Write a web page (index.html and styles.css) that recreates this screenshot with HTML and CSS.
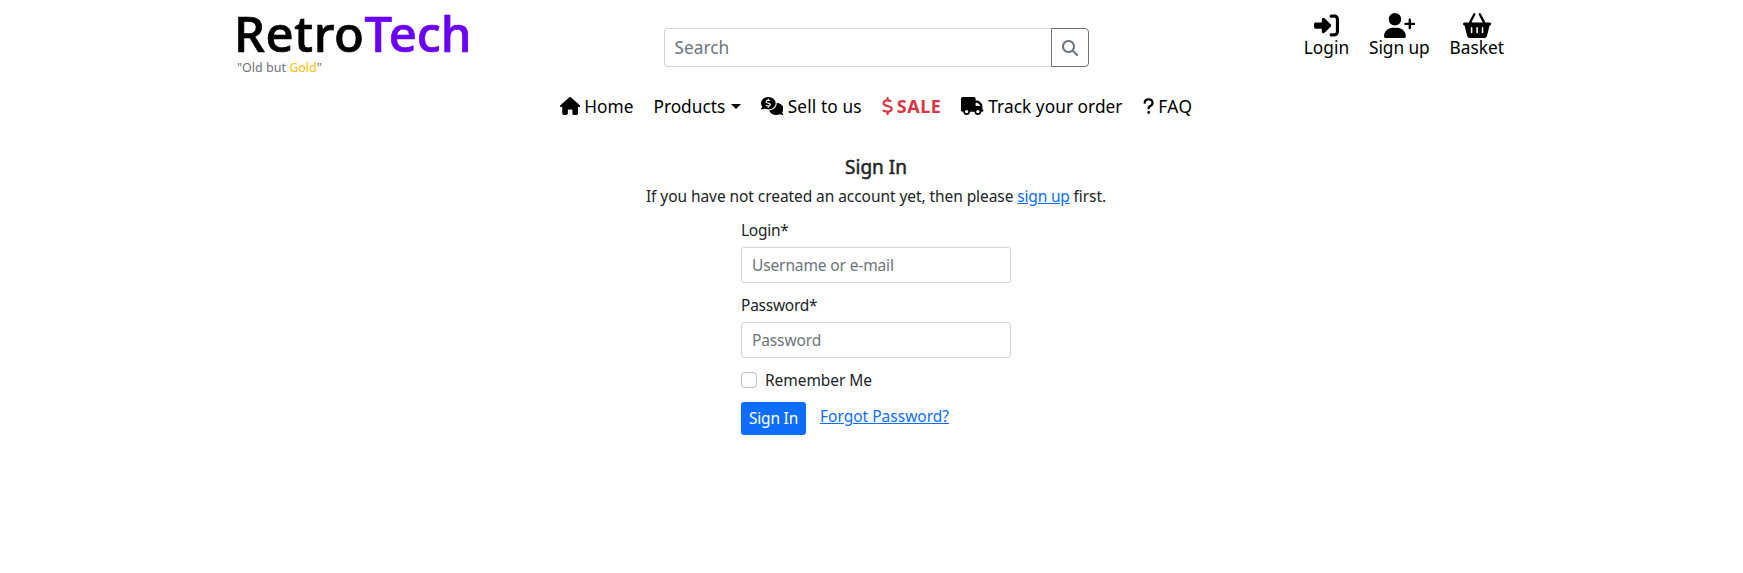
FILE: index.html
```html
<!DOCTYPE html>
<html lang="en">
<head>
<meta charset="utf-8">
<title>RetroTech - Sign In</title>
<link rel="stylesheet" href="styles.css">
</head>
<body>
<header class="header">
  <div class="brand">
    <a class="logo" href="#"><span class="logo-retro">Retro</span><span class="logo-tech">Tech</span></a>
    <span class="tagline">"Old but <span class="gold">Gold</span>"</span>
  </div>
  <form class="search">
    <input class="search-input" type="text" placeholder="Search" aria-label="Search">
    <button class="search-button" type="button" aria-label="Search">
      <svg class="search-icon" viewBox="0 0 512 512"><path d="M416 208c0 45.9-14.9 88.3-40 122.7L502.6 457.4c12.5 12.5 12.5 32.8 0 45.3s-32.8 12.5-45.3 0L330.7 376c-34.4 25.2-76.8 40-122.7 40C93.1 416 0 322.9 0 208S93.1 0 208 0S416 93.1 416 208zM208 352a144 144 0 1 0 0-288 144 144 0 1 0 0 288z"/></svg>
    </button>
  </form>
  <div class="account">
    <a class="account-link login" href="#">
      <svg class="account-icon" viewBox="0 0 512 512"><path d="M217.9 105.9L340.7 228.7c7.2 7.2 11.3 17.1 11.3 27.3s-4.1 20.1-11.3 27.3L217.9 406.1c-6.4 6.4-15 9.9-24 9.9c-18.7 0-33.9-15.2-33.9-33.9l0-62.1L32 320c-17.7 0-32-14.3-32-32l0-64c0-17.7 14.3-32 32-32l128 0 0-62.1c0-18.7 15.2-33.9 33.9-33.9c9 0 17.6 3.6 24 9.9zM352 416l64 0c17.7 0 32-14.3 32-32l0-256c0-17.7-14.3-32-32-32l-64 0c-17.7 0-32-14.3-32-32s14.3-32 32-32l64 0c53 0 96 43 96 96l0 256c0 53-43 96-96 96l-64 0c-17.7 0-32-14.3-32-32s14.3-32 32-32z"/></svg>
      <span>Login</span>
    </a>
    <a class="account-link signup" href="#">
      <svg class="account-icon" viewBox="0 0 640 512"><path d="M96 128a128 128 0 1 1 256 0A128 128 0 1 1 96 128zM0 482.3C0 383.8 79.8 304 178.3 304h91.4C368.2 304 448 383.8 448 482.3c0 16.4-13.3 29.7-29.7 29.7H29.7C13.3 512 0 498.7 0 482.3zM504 312V248H440c-13.3 0-24-10.7-24-24s10.7-24 24-24h64V136c0-13.3 10.7-24 24-24s24 10.7 24 24v64h64c13.3 0 24 10.7 24 24s-10.7 24-24 24H552v64c0 13.3-10.7 24-24 24s-24-10.7-24-24z"/></svg>
      <span>Sign up</span>
    </a>
    <a class="account-link basket" href="#">
      <svg class="account-icon" viewBox="0 0 576 512"><path d="M253.3 35.1c6.1-11.8 1.5-26.3-10.2-32.4s-26.3-1.5-32.4 10.2L117.6 192H32c-17.7 0-32 14.3-32 32s14.3 32 32 32L83.9 463.5C91 492 116.6 512 146 512H430c29.4 0 55-20 62.1-48.5L544 256c17.7 0 32-14.3 32-32s-14.3-32-32-32H458.4L365.3 12.9C359.2 1.2 344.7-3.4 332.9 2.7s-16.3 20.6-10.2 32.4L404.3 192H171.7L253.3 35.1zM192 304v96c0 8.8-7.2 16-16 16s-16-7.2-16-16V304c0-8.8 7.2-16 16-16s16 7.2 16 16zm96-16c8.8 0 16 7.2 16 16v96c0 8.8-7.2 16-16 16s-16-7.2-16-16V304c0-8.8 7.2-16 16-16zm128 16v96c0 8.8-7.2 16-16 16s-16-7.2-16-16V304c0-8.8 7.2-16 16-16s16 7.2 16 16z"/></svg>
      <span>Basket</span>
    </a>
  </div>
</header>
<nav class="nav">
  <a class="nav-link home" href="#"><svg class="nav-icon" viewBox="0 0 576 512"><path d="M575.8 255.5c0 18-15 32.1-32 32.1h-32l.7 160.2c0 2.7-.2 5.4-.5 8.1V472c0 22.1-17.9 40-40 40H456c-1.1 0-2.2 0-3.3-.1c-1.4 .1-2.8 .1-4.2 .1H416 392c-22.1 0-40-17.9-40-40V448 384c0-17.7-14.3-32-32-32H256c-17.7 0-32 14.3-32 32v64 24c0 22.1-17.9 40-40 40H160 128.1c-1.5 0-3-.1-4.5-.2c-1.2 .1-2.4 .2-3.6 .2H104c-22.1 0-40-17.9-40-40V360c0-.9 0-1.9 .1-2.8V287.6H32c-18 0-32-14-32-32.1c0-9 3-17 10-24L266.4 8c7-7 15-8 22-8s15 2 21 7L564.8 231.5c8 7 12 15 11 24z"/></svg><span>Home</span></a>
  <a class="nav-link products" href="#"><span>Products</span><span class="caret"></span></a>
  <a class="nav-link sell" href="#"><svg class="nav-icon" viewBox="0 0 640 512"><path d="M416 176c0 97.2-93.1 176-208 176c-38.2 0-73.9-8.7-104.7-23.9c-7.5 4-16 7.9-25.2 11.4C59.8 346.4 37.8 352 16 352c-6.9 0-13.1-4.5-15.2-11.1s.2-13.8 5.8-17.9c.8-.6 14-10 19-19c5.5-7 10.7-15.4 14.2-24.7C14.7 250.3 0 214.6 0 176C0 78.8 93.1 0 208 0S416 78.8 416 176zM231.5 383C348.9 372.9 448 288.3 448 176c0-5.2-.2-10.4-.6-15.5C555.1 167.1 640 243.2 640 336c0 38.6-14.7 74.3-39.6 103.4c3.5 9.4 8.7 17.7 14.2 24.7c4.8 6.2 9.7 11 13.3 14.3c1.8 1.6 3.3 2.9 5.6 4.7c5.6 4.1 7.9 11.3 5.8 17.9c-2.1 6.6-8.3 11.1-15.2 11.1c-21.8 0-43.8-5.6-62.1-12.5c-9.2-3.5-17.8-7.4-25.2-11.4C505.9 503.3 470.2 512 432 512c-95.6 0-176.2-54.6-200.5-129z"/><path class="coin" transform="translate(126 45) scale(.51)" d="M160 0c17.7 0 32 14.3 32 32V67.7c1.6 .2 3.1 .4 4.7 .7c.4 .1 .7 .1 1.1 .2l48 8.8c17.4 3.2 28.9 19.9 25.7 37.2s-19.9 28.9-37.2 25.7l-47.5-8.7c-31.3-4.6-58.9-1.5-78.3 6.2s-27.2 18.3-29 28.1c-2 10.7-.5 16.7 1.2 20.4c1.8 3.9 5.5 8.3 12.8 13.2c16.3 10.7 41.3 17.7 73.7 26.3l2.9 .8c28.6 7.6 63.6 16.8 89.6 33.8c14.2 9.3 27.6 21.9 35.9 39.5c8.5 17.9 10.3 37.9 6.4 59.2c-6.9 38-33.1 63.4-65.6 76.7c-13.7 5.6-28.6 9.2-44.4 11V480c0 17.7-14.3 32-32 32s-32-14.3-32-32V445.1c-.4-.1-.9-.1-1.3-.2l-.2 0c-24.4-3.8-64.5-14.3-91.5-26.3c-16.1-7.2-23.4-26.1-16.2-42.2s26.1-23.4 42.2-16.2c20.9 9.3 55.3 18.5 75.2 21.6c31.9 4.7 58.2 2 76-5.3c16.9-6.9 24.6-16.9 26.8-28.9c1.9-10.6 .4-16.7-1.3-20.4c-1.9-4-5.6-8.4-13-13.3c-16.4-10.7-41.5-17.7-74-26.3l-2.8-.7c-28.5-7.6-63.4-16.9-89.4-33.9c-14.2-9.3-27.5-22-35.8-39.6c-8.4-17.9-10.1-37.9-6.1-59.2C23.7 116 52.3 91.2 84.8 78.3c13.3-5.3 27.9-8.9 43.2-11V32c0-17.7 14.3-32 32-32z"/></svg><span>Sell to us</span></a>
  <a class="nav-link sale" href="#"><svg class="nav-icon" viewBox="0 0 320 512"><path d="M160 0c17.7 0 32 14.3 32 32V67.7c1.6 .2 3.1 .4 4.7 .7c.4 .1 .7 .1 1.1 .2l48 8.8c17.4 3.2 28.9 19.9 25.7 37.2s-19.9 28.9-37.2 25.7l-47.5-8.7c-31.3-4.6-58.9-1.5-78.3 6.2s-27.2 18.3-29 28.1c-2 10.7-.5 16.7 1.2 20.4c1.8 3.9 5.5 8.3 12.8 13.2c16.3 10.7 41.3 17.7 73.7 26.3l2.9 .8c28.6 7.6 63.6 16.8 89.6 33.8c14.2 9.3 27.6 21.9 35.9 39.5c8.5 17.9 10.3 37.9 6.4 59.2c-6.9 38-33.1 63.4-65.6 76.7c-13.7 5.6-28.6 9.2-44.4 11V480c0 17.7-14.3 32-32 32s-32-14.3-32-32V445.1c-.4-.1-.9-.1-1.3-.2l-.2 0c-24.4-3.8-64.5-14.3-91.5-26.3c-16.1-7.2-23.4-26.1-16.2-42.2s26.1-23.4 42.2-16.2c20.9 9.3 55.3 18.5 75.2 21.6c31.9 4.7 58.2 2 76-5.3c16.9-6.9 24.6-16.9 26.8-28.9c1.9-10.6 .4-16.7-1.3-20.4c-1.9-4-5.6-8.4-13-13.3c-16.4-10.7-41.5-17.7-74-26.3l-2.8-.7c-28.5-7.6-63.4-16.9-89.4-33.9c-14.2-9.3-27.5-22-35.8-39.6c-8.4-17.9-10.1-37.9-6.1-59.2C23.7 116 52.3 91.2 84.8 78.3c13.3-5.3 27.9-8.9 43.2-11V32c0-17.7 14.3-32 32-32z"/></svg><span>SALE</span></a>
  <a class="nav-link track" href="#"><svg class="nav-icon" viewBox="0 0 640 512"><path d="M48 0C21.5 0 0 21.5 0 48V368c0 26.5 21.5 48 48 48H64c0 53 43 96 96 96s96-43 96-96H384c0 53 43 96 96 96s96-43 96-96h32c17.7 0 32-14.3 32-32s-14.3-32-32-32V288 256 237.3c0-17-6.7-33.3-18.7-45.3L512 114.7c-12-12-28.3-18.7-45.3-18.7H416V48c0-26.5-21.5-48-48-48H48zM416 160h50.7L544 237.3V256H416V160zM112 416a48 48 0 1 1 96 0 48 48 0 1 1 -96 0zm368-48a48 48 0 1 1 0 96 48 48 0 1 1 0-96z"/></svg><span>Track your order</span></a>
  <a class="nav-link faq" href="#"><svg class="nav-icon" viewBox="0 0 320 512"><path d="M80 160c0-35.3 28.7-64 64-64h32c35.3 0 64 28.7 64 64v3.6c0 21.8-11.1 42.1-29.4 53.8l-42.2 27.1c-25.2 16.2-40.4 44.1-40.4 74V320c0 17.7 14.3 32 32 32s32-14.3 32-32v-1.4c0-8.2 4.2-15.8 11-20.2l42.2-27.1c36.6-23.6 58.8-64.1 58.8-107.7V160c0-70.7-57.3-128-128-128H144C73.3 32 16 89.3 16 160c0 17.7 14.3 32 32 32s32-14.3 32-32zm80 320a40 40 0 1 0 0-80 40 40 0 1 0 0 80z"/></svg><span>FAQ</span></a>
</nav>
<main class="main">
  <h1 class="title">Sign In</h1>
  <p class="intro">If you have not created an account yet, then please <a class="link intro-link" href="#">sign up</a> first.</p>
  <form class="form">
    <label class="label" for="login">Login*</label>
    <input class="field" id="login" type="text" placeholder="Username or e-mail">
    <label class="label" for="password">Password*</label>
    <input class="field" id="password" type="password" placeholder="Password">
    <label class="remember"><input class="checkbox" type="checkbox">Remember Me</label>
    <div class="actions">
      <button class="submit" type="button">Sign In</button>
      <a class="link forgot" href="#">Forgot Password?</a>
    </div>
  </form>
</main>
</body>
</html>
```

FILE: styles.css
```css
* { box-sizing: border-box; }
body {
  margin: 0;
  background: #fff;
  color: #212529;
  font-family: "Noto Sans", "Open Sans", sans-serif;
  font-size: 15.5px;
  line-height: 24px;
}
a { color: #000; text-decoration: none; white-space: nowrap; }
svg { display: block; fill: currentColor; }
input, button { font: inherit; }

.header {
  display: grid;
  grid-template-columns: 427px 425px 1fr;
  width: 1268px;
  height: 86px;
  margin-left: 237px;
}
.brand { display: flex; flex-direction: column; align-items: flex-start; }
.logo {
  height: 58px;
  padding-top: 6px;
  margin-left: -3px;
  font-size: 49px;
  font-weight: 500;
  line-height: 55px;
  -webkit-text-stroke: .7px currentColor;
}
.logo-retro { letter-spacing: .6px; }
.logo-tech { color: #6a00f4; }
.tagline { font-size: 12.5px; line-height: 18px; padding-top: 1px; color: #6c757d; }
.gold { color: #ffc107; }
.search { display: flex; height: 39px; margin-top: 28px; }
.search-input {
  flex: 1;
  min-width: 0;
  padding: 0 9.5px;
  border: 1px solid #ced4da;
  border-right: 0;
  border-radius: 4px 0 0 4px;
  font-size: 17.3px;
}
::placeholder { color: #6c757d; opacity: 1; }
.search-button {
  display: grid;
  place-items: center;
  width: 38px;
  padding: 0;
  border: 1px solid #6c757d;
  border-radius: 0 4px 4px 0;
  background: #fff;
  color: #6c757d;
}
.search-icon { width: 16px; height: 16px; }
.account { display: flex; justify-content: flex-end; gap: 20px; padding: 13px 1px 0 0; }
.account-link { display: flex; flex-direction: column; align-items: center; font-size: 17.3px; line-height: 20px; }
.account-icon { height: 25px; }
.signup { letter-spacing: -.08px; }

.nav { display: flex; gap: 20px; height: 40px; padding: 11px 0 0 560px; font-size: 17.3px; line-height: 19px; }
.nav-link { display: flex; gap: 4.5px; height: 19px; }
.nav-icon { height: 18px; }
.coin { fill: #fff; }
.home { gap: 4px; }
.products { gap: 6px; }
.caret { align-self: center; border: 5px solid transparent; border-top-color: #000; border-bottom: 0; }
.sell { letter-spacing: .1px; margin-left: -.5px; }
.sale { gap: 4px; color: #dc3545; font-size: 18px; font-weight: 700; letter-spacing: .5px; }
.track { letter-spacing: .04px; }
.faq { letter-spacing: .4px; }

.main { padding-top: 29px; }
.title { margin: 0; padding-left: 9px; font-size: 19px; font-weight: 400; line-height: 24px; text-align: center; -webkit-text-stroke: .5px currentColor; }
.intro { margin: 5px 0 0; padding-left: 9px; text-align: center; letter-spacing: -.07px; }
.link { color: #0d6efd; text-decoration: underline; }
.intro-link { letter-spacing: -.2px; }
.form { display: flex; flex-direction: column; width: 270px; margin: 10px 0 0 741px; }
.label { line-height: 24px; margin-bottom: 5px; letter-spacing: -.25px; }
.field {
  height: 36px;
  margin-bottom: 10px;
  padding: 0 10px;
  border: 1px solid #ced4da;
  border-radius: 3px;
  letter-spacing: -.13px;
}
.remember { display: flex; align-items: center; gap: 8px; letter-spacing: -.06px; }
.checkbox { width: 16px; height: 16px; margin: 0; appearance: none; border: 1px solid #bfbfbf; border-radius: 4px; }
.actions { display: flex; gap: 14px; margin-top: 10px; }
.submit { width: 65px; height: 33px; padding: 0 0 2px; border: 0; border-radius: 3px; background: #0d6efd; color: #fff; letter-spacing: -.2px; }
.forgot { padding-top: 2px; }
```
